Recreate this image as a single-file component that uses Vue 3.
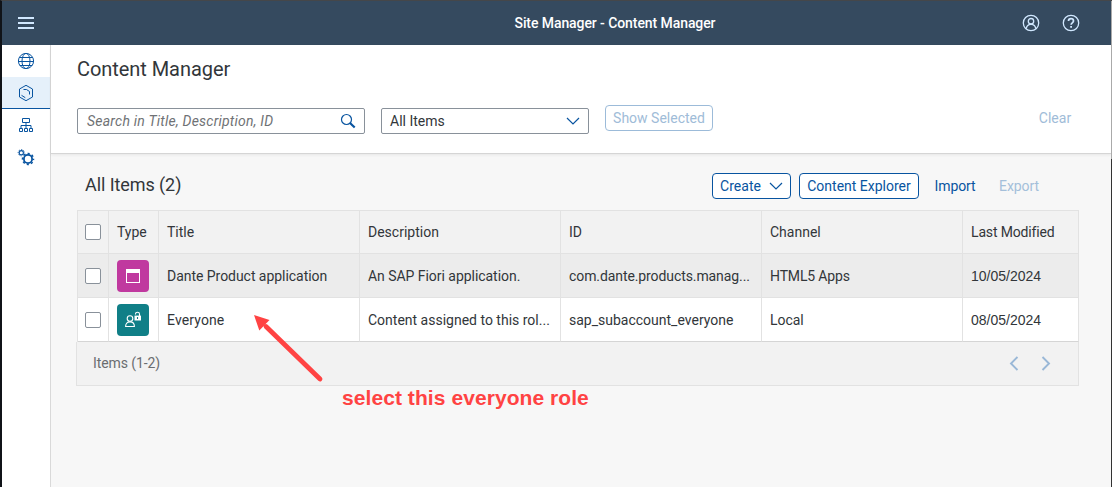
<script setup>
const columns = ['Title', 'Description', 'ID', 'Channel', 'Last Modified']
const rows = [
  {
    type: 'app',
    cells: ['Dante Product application', 'An SAP Fiori application.', 'com.dante.products.manag...', 'HTML5 Apps', '10/05/2024'],
  },
  {
    type: 'role',
    cells: ['Everyone', 'Content assigned to this rol...', 'sap_subaccount_everyone', 'Local', '08/05/2024'],
  },
]
const kinds = ['title', 'desc', 'id', 'channel', 'date']
</script>

<template>
  <div class="window">
    <header class="shell">
      <svg class="burger" width="16" height="12" viewBox="0 0 16 12"><path d="M0 0h16v2H0zM0 5h16v2H0zM0 10h16v2H0z" fill="#d1e8ff" /></svg>
      <h1><span>Site Manager - Content Manager</span></h1>
      <div class="shell-actions">
        <svg width="18" height="18" viewBox="0 0 18 18" fill="none" stroke="#d1e8ff" stroke-width="1.3">
          <circle cx="9" cy="9" r="7.7" /><circle cx="9" cy="7.2" r="2.7" /><path d="M4.3 14.6c.3-2.7 2-4.2 4.7-4.2s4.4 1.5 4.7 4.2" />
        </svg>
        <svg width="18" height="18" viewBox="0 0 18 18" fill="none" stroke="#d1e8ff" stroke-width="1.3">
          <circle cx="9" cy="9" r="7.7" /><path stroke-width="1.7" d="M6.5 7.1C6.5 5.5 7.5 4.7 9 4.7s2.5.8 2.5 2.2c0 1.9-2.4 1.9-2.4 3.8" /><path stroke-width="1.8" d="M9.1 12v1.8" />
        </svg>
      </div>
    </header>

    <div class="body">
      <nav class="side">
        <a class="item">
          <svg width="18" height="18" viewBox="0 0 18 18" fill="none" stroke="#0854a0">
            <circle cx="9" cy="9" r="7.6" /><ellipse cx="9" cy="9" rx="4" ry="7.6" /><path d="M2.5 5.5h13M1.5 9.5h15M2.8 13.5h12.4" />
          </svg>
        </a>
        <a class="item selected">
          <svg width="18" height="18" viewBox="0 0 18 18" fill="none" stroke="#0854a0">
            <path d="M9 1.3L15.500 5v8L9 16.700 2.500 13V5z" /><path d="M6.500 5.500h3l3 2V10.500" /><path d="M4.500 11.300l3.800 2.400" />
          </svg>
        </a>
        <a class="item">
          <svg width="18" height="18" viewBox="0 0 18 18" fill="none" stroke="#0854a0">
            <path d="M5.5 2.5h7v4h-7zM9 6.5v6M4 12.5v-3h10v3M2.5 12.5h3v3h-3zM7.5 12.5h3v3h-3zM12.5 12.5h3v3h-3z" />
          </svg>
        </a>
        <a class="item">
          <svg width="18" height="18" viewBox="0 0 18 18" fill="none" stroke="#0854a0">
            <circle cx="11" cy="11" r="4.1" stroke-width="1.8" />
            <circle cx="11" cy="11" r="5.5" stroke-width="1.5" stroke-dasharray="2.16 2.16" stroke-dashoffset="1.1" />
            <circle cx="4.3" cy="4.7" r="2.1" stroke-width="1.1" />
            <circle cx="4.3" cy="4.7" r="3.1" stroke-width="1" stroke-dasharray="1.217 1.217" stroke-dashoffset=".6" />
          </svg>
        </a>
      </nav>

      <main>
        <section class="head">
          <h2><span>Content Manager</span></h2>
          <div class="filters">
            <div class="field search">
              <span class="placeholder">Search in Title, Description, ID</span>
              <svg width="16" height="16" viewBox="0 0 16 16" fill="none" stroke="#0854a0"><circle cx="6.5" cy="6.5" r="5" stroke-width="1.2" /><path d="M10 10l4.7 4.5" stroke-width="2.2" /></svg>
            </div>
            <div class="field select">
              <span class="all">All Items</span>
              <svg width="14" height="8" viewBox="0 0 14 8" fill="none" stroke="#0854a0" stroke-width="1.2"><path d="M1 1l6 6 6-6" /></svg>
            </div>
            <button class="btn show"><span>Show Selected</span></button>
            <button class="link clear"><span>Clear</span></button>
          </div>
        </section>

        <section class="content">
          <div class="toolbar">
            <h3><span>All Items (2)</span></h3>
            <button class="btn create"><span>Create</span>
              <svg width="14" height="8" viewBox="0 0 14 8" fill="none" stroke="#0854a0" stroke-width="1.2"><path d="M1 1l6 6 6-6" /></svg>
            </button>
            <button class="btn explorer"><span>Content Explorer</span></button>
            <button class="link import"><span>Import</span></button>
            <button class="link export"><span>Export</span></button>
          </div>

          <div class="table">
            <div class="row header">
              <div class="cell box"><i class="check"></i></div>
              <div class="cell"><span class="type">Type</span></div>
              <div v-for="(c, i) in columns" :key="c" class="cell"><span :class="'h-' + kinds[i]">{{ c }}</span></div>
            </div>
            <div v-for="r in rows" :key="r.type" class="row" :class="r.type">
              <div class="cell box"><i class="check"></i></div>
              <div class="cell">
                <div class="tile">
                  <svg v-if="r.type === 'app'" width="16" height="16" viewBox="0 0 16 16"><path fill="#fff" fill-rule="evenodd" d="M1 1h14v14H1zM2 5v9h12V5z" /></svg>
                  <svg v-else width="18" height="18" viewBox="0 0 18 18" fill="none" stroke="#fff" stroke-width="1.1">
                    <circle cx="6" cy="7.5" r="2.8" /><path d="M1.600 15.500c0-3 1.700-4.600 4.400-4.600s4.400 1.600 4.400 4.600z" /><path d="M11.500 3.500V3c0-2.300 4-2.300 4 0v2" /><path d="M10.500 4.600h6.500V9.500h-6.500z" fill="#fff" stroke="none" /><path d="M13.500 6v2" stroke="#107f87" />
                  </svg>
                </div>
              </div>
              <div v-for="(t, i) in r.cells" :key="i" class="cell"><span :class="kinds[i]">{{ t }}</span></div>
            </div>
          </div>
          <footer class="pager">
            <span class="count">Items (1-2)</span>
            <svg width="10" height="15" viewBox="0 0 10 15" fill="none" stroke="#9ab8d7" stroke-width="1.9"><path d="M8.5 1L2 7.5 8.5 14" /></svg>
            <svg width="10" height="15" viewBox="0 0 10 15" fill="none" stroke="#9ab8d7" stroke-width="1.9"><path d="M1.5 1L8 7.5 1.5 14" /></svg>
          </footer>
        </section>
      </main>
    </div>

    <svg class="arrow" width="72" height="72" viewBox="0 0 72 72">
      <path d="M14 13.5L68 66" stroke="#ff4343" stroke-width="4.8" stroke-linecap="round" />
      <path d="M2 2L17.5 7 7.3 17.5z" fill="#ff4343" />
    </svg>
    <div class="note"><span>select this everyone role</span></div>
    <div class="edge"></div>
  </div>
</template>

<style scoped>
* { box-sizing: border-box; }
.window { position: relative; width: 1112px; height: 487px; overflow: hidden; background: #f7f7f7; border-left: 2px solid #101318; border-top: 1px solid #45474a; font: 14px "Roboto", "Noto Sans", sans-serif; color: #32363a; }
h1, h2, h3 { margin: 0; font-weight: 400; }
span { white-space: nowrap; }
svg { display: block; flex: none; }
.shell { display: flex; align-items: center; height: 44px; padding: 0 32px 0 16px; background: #354a5f; }
.shell h1 { flex: 1; padding-left: 174px; text-align: center; color: #fff; font-size: 14px; font-weight: 500; letter-spacing: -.08px; }
.shell-actions { display: flex; justify-content: flex-end; gap: 22px; }
.body { display: flex; height: 442px; }
.side { width: 49px; background: #fff; border-right: 1px solid #d9d9d9; }
.item { display: flex; height: 32px; justify-content: center; align-items: center; }
.selected { background: #e5f0fa; border-bottom: 1px solid #0854a0; }
main { flex: 1; min-width: 0; }
.head { height: 109px; padding: 10px 40px 0 26px; background: #fff; border-bottom: 1px solid #d5d5d5; box-shadow: 0 1px 3px #00000012; }
.head h2 { font-size: 20px; height: 28px; line-height: 28px; letter-spacing: -.06px; }
.filters { display: flex; align-items: flex-start; padding-top: 22px; }
.field { display: flex; align-items: center; justify-content: space-between; height: 26px; margin-top: 3px; border: 1px solid #89919a; border-radius: 2px; background: #fff; padding: 0 8px; }
.search { width: 288px; color: #6f7275; font-style: italic; letter-spacing: .23px; padding-left: 9px; }
.select { width: 208px; margin-left: 16px; }
button { font: inherit; padding: 0; margin: 0; border: 0; background: none; display: flex; align-items: center; justify-content: center; height: 26px; color: #0854a0; flex: none; }
.btn { border: 1px solid #0854a0; border-radius: 4px; background: #fff; }
.show { width: 108px; margin-left: 16px; border-color: #9cbbd9; color: #a0bcd8; }
.clear { margin-left: auto; color: #a0bcd8; width: 34px; }
.content { padding: 19px 32px 0 26px; }
.toolbar { display: flex; height: 37px; padding-right: 41px; }
.toolbar h3 { flex: 1; padding-left: 8px; font-size: 18px; line-height: 24px; letter-spacing: -.08px; }
.create { width: 79px; gap: 8px; }
.explorer { width: 120px; margin-left: 8px; }
.import { width: 40px; margin-left: 16px; letter-spacing: -.1px; }
.export { width: 40px; margin-left: 24px; color: #a4bfda; letter-spacing: -.1px; }
.table { width: 1002px; border: 1px solid #e2e2e2; border-right: 0; border-bottom: 0; }
.row { display: grid; grid-template-columns: 31px 50px repeat(4, 201px) 1fr; height: 44px; background: #fff; }
.row.header { height: 43px; background: #f2f2f2; }
.row.app { background: #ececec; }
.cell { display: flex; align-items: center; padding-left: 8px; border-right: 1px solid #e2e2e2; border-bottom: 1px solid #e2e2e2; min-width: 0; }
.row.role .cell { border-bottom-color: #d5d5d5; }
.h-date { letter-spacing: -.15px; }
.title, .desc { letter-spacing: 0; }
.app .title, .app .desc { letter-spacing: -.04px; }
.app .id { letter-spacing: -.09px; }
.role .title { letter-spacing: .12px; }
.channel { letter-spacing: -.15px; }
.role .channel { letter-spacing: -.05px; }
.date { font-family: "Liberation Sans", sans-serif; }
.box { padding-left: 7px; }
.check { width: 16px; height: 16px; background: #fff; border: 1px solid #89919a; border-radius: 2px; }
.tile { display: flex; align-items: center; justify-content: center; width: 32px; height: 32px; border-radius: 4px; background: #c0399f; }
.role .tile { background: #107f87; }
.pager { display: flex; align-items: center; width: 1003px; height: 44px; margin-left: -1px; padding: 0 27px 1px 16px; background: #f2f2f2; border: 1px solid #e2e2e2; border-top: 0; gap: 22px; }
.count { margin-right: auto; color: #6a6d70; letter-spacing: -.1px; }
.arrow { position: absolute; left: 250px; top: 312px; }
.note { position: absolute; left: 340px; top: 384px; font: bold 21px/26px "Liberation Sans", sans-serif; letter-spacing: .07px; color: #ff4343; }
.edge { position: absolute; right: 0; top: 0; width: 1px; height: 486px; background: linear-gradient(#aaa 158px, #333 158px); }
</style>
